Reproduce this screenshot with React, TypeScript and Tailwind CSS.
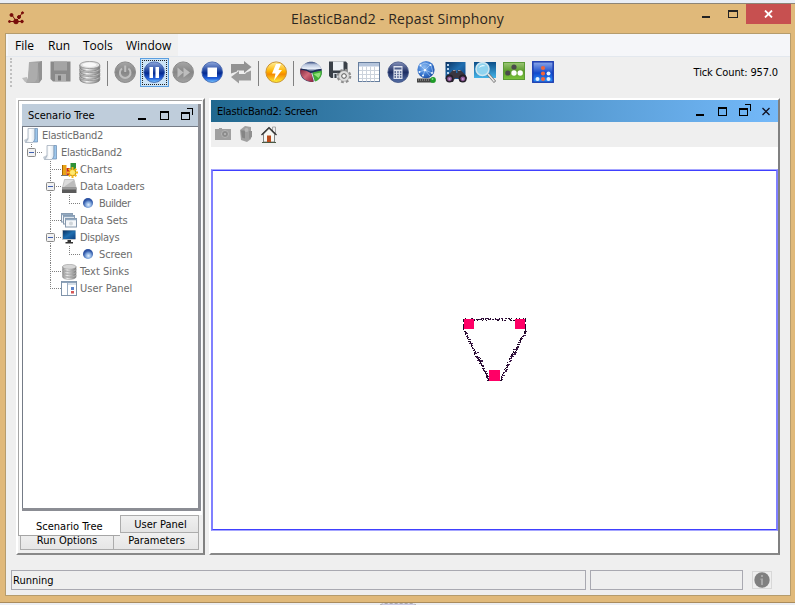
import React from "react";

const BOX = "block h-[23px] w-[23px] shrink-0";

function Svg({ children }: { children: React.ReactNode }) {
  return (
    <svg viewBox="0 0 23 23" className={BOX}>
      {children}
    </svg>
  );
}

function Defs() {
  return (
    <svg className="absolute h-0 w-0" aria-hidden="true">
      <defs>
        <linearGradient id="grayBall" x1="0" y1="0" x2="0" y2="1">
          <stop offset="0" stopColor="#a6a6a6" />
          <stop offset=".5" stopColor="#868686" />
          <stop offset="1" stopColor="#a2a2a2" />
        </linearGradient>
        <linearGradient id="blueBall" x1="0" y1="0" x2="0" y2="1">
          <stop offset="0" stopColor="#8fa8dc" />
          <stop offset=".45" stopColor="#1a409e" />
          <stop offset=".55" stopColor="#052a90" />
          <stop offset=".8" stopColor="#2360dc" />
          <stop offset="1" stopColor="#7fd0ff" />
        </linearGradient>
        <linearGradient id="navyBall" x1="0" y1="0" x2="0" y2="1">
          <stop offset="0" stopColor="#8592bb" />
          <stop offset=".5" stopColor="#1d2d62" />
          <stop offset="1" stopColor="#5570a8" />
        </linearGradient>
        <linearGradient id="yellowBall" x1="0" y1="0" x2="0" y2="1">
          <stop offset="0" stopColor="#fff0a0" />
          <stop offset=".45" stopColor="#ffb400" />
          <stop offset=".6" stopColor="#f58a00" />
          <stop offset="1" stopColor="#fff43a" />
        </linearGradient>
        <linearGradient id="disk" x1="0" y1="0" x2="1" y2="0">
          <stop offset="0" stopColor="#8a8a8a" />
          <stop offset=".35" stopColor="#f4f4f4" />
          <stop offset="1" stopColor="#777" />
        </linearGradient>
        <linearGradient id="screen" x1="0" y1="0" x2="1" y2="1">
          <stop offset="0" stopColor="#0b315f" />
          <stop offset=".5" stopColor="#1f6eb0" />
          <stop offset="1" stopColor="#0d3f80" />
        </linearGradient>
        <linearGradient id="sky" x1="0" y1="0" x2="0" y2="1">
          <stop offset="0" stopColor="#0b4d88" />
          <stop offset="1" stopColor="#46b4e8" />
        </linearGradient>
        <linearGradient id="green" x1="0" y1="0" x2="0" y2="1">
          <stop offset="0" stopColor="#9cc676" />
          <stop offset=".5" stopColor="#5c9c2c" />
          <stop offset="1" stopColor="#7cc53c" />
        </linearGradient>
        <linearGradient id="bluePanel" x1="0" y1="0" x2="0" y2="1">
          <stop offset="0" stopColor="#8fa9ea" />
          <stop offset=".45" stopColor="#2a5bd0" />
          <stop offset=".55" stopColor="#0f48cc" />
          <stop offset="1" stopColor="#2c98ff" />
        </linearGradient>
        <linearGradient id="pieTop" x1="0" y1="0" x2="0" y2="1">
          <stop offset="0" stopColor="#34497c" />
          <stop offset=".3" stopColor="#b9c6de" />
          <stop offset=".7" stopColor="#e8eef8" />
          <stop offset="1" stopColor="#1d3262" />
        </linearGradient>
        <linearGradient id="pieRed" x1="0" y1="0" x2="1" y2="1">
          <stop offset="0" stopColor="#7a1f38" />
          <stop offset=".5" stopColor="#cf6878" />
          <stop offset="1" stopColor="#8c1d3a" />
        </linearGradient>
        <linearGradient id="page" x1="0" y1="0" x2="1" y2="0">
          <stop offset="0" stopColor="#d4dce5" />
          <stop offset=".5" stopColor="#ffffff" />
          <stop offset="1" stopColor="#dbe6f0" />
        </linearGradient>
        <radialGradient id="globe" cx=".4" cy=".35" r=".7">
          <stop offset="0" stopColor="#8dbcf2" />
          <stop offset=".6" stopColor="#3a78d0" />
          <stop offset="1" stopColor="#1c4ba0" />
        </radialGradient>
        <radialGradient id="bead" cx=".55" cy=".68" r=".62">
          <stop offset="0" stopColor="#e4f1ff" />
          <stop offset=".45" stopColor="#7fa6dc" />
          <stop offset=".8" stopColor="#3158a8" />
          <stop offset="1" stopColor="#2a50a0" />
        </radialGradient>
      </defs>
    </svg>
  );
}

const OpenIcon = () => (
  <Svg>
    <path d="M1 17l5-1v3l2 3-4-1z" fill="#bdbdbd" />
    <path d="M9 1l12-1v18l-3 4H6l1-5z" fill="#a2a2a2" />
    <path d="M8 1l9 1-1 16-2 3-9 1 2-6z" fill="#acacac" />
    <path d="M17 2l4-2v18l-3 4z" fill="#929292" />
  </Svg>
);
const SaveIcon = () => (
  <Svg>
    <path d="M.5 .5h20v20H3L.500 18z" fill="#8a8a8a" />
    <path d="M4 .5h13v9H4z" fill="#a4a4a4" />
    <path d="M5 13h11v7H5z" fill="#adadad" />
    <path d="M8 14.500h3v5H8z" fill="#777" />
  </Svg>
);
const DbIcon = () => (
  <Svg>
    {[13.5, 9.5, 5.5, 1.5].map((y) => (
      <g key={y}>
        <path d={`M.8 ${y + 2.5}v2.500c0 5 20 5 20 0v-2.500z`} fill="url(#disk)" stroke="#7c7c7c" strokeWidth=".7" />
        <ellipse cx="10.800" cy={y + 2.5} rx="10" ry="3.600" fill="#e0e0e0" stroke="#888" strokeWidth=".7" />
      </g>
    ))}
    <ellipse cx="10.500" cy="3.700" rx="7" ry="2.200" fill="#f8f8f8" />
  </Svg>
);
const PowerIcon = () => (
  <Svg>
    <circle cx="11.200" cy="11.200" r="10.300" fill="url(#grayBall)" stroke="#8b8b8b" />
    <path d="M8 7.500a5.300 5.300 0 1 0 6.400 0" fill="none" stroke="#bfbfbf" strokeWidth="2" />
    <path d="M11.200 4.500v6.500" stroke="#bfbfbf" strokeWidth="2" />
  </Svg>
);
const PauseIcon = () => (
  <Svg>
    <circle cx="11.200" cy="11.200" r="10.300" fill="url(#blueBall)" stroke="#375ba8" strokeWidth=".8" />
    <path d="M6.500 6h3.500v11H6.500zM12.500 6H16v11h-3.500z" fill="#fff" />
  </Svg>
);
const ForwardIcon = () => (
  <Svg>
    <circle cx="11.200" cy="11.200" r="10.300" fill="url(#grayBall)" stroke="#8b8b8b" />
    <path d="M5.500 6.500l6 5-6 5zM11.500 6.500l6.500 5-6.500 5z" fill="#bdbdbd" />
  </Svg>
);
const StopIcon = () => (
  <Svg>
    <circle cx="11.200" cy="11.200" r="10.300" fill="url(#blueBall)" stroke="#375ba8" strokeWidth=".8" />
    <path d="M6.500 6.500h9.500v9.500H6.500z" fill="#fff" />
  </Svg>
);
const LoopIcon = () => (
  <Svg>
    <path d="M1 12.500V3h13V0l7.500 6L14 12V9.500H7v1z" fill="#929292" />
    <path d="M21 9.500V19.500H9v3L1 16l8-6v3h6.500v-1z" fill="#9c9c9c" />
  </Svg>
);
const FlashIcon = () => (
  <Svg>
    <circle cx="11.200" cy="11.200" r="10.300" fill="url(#yellowBall)" stroke="#ca9434" />
    <path d="M11 3h5l-2.500 6H17L9 19.500l1.500-7H7z" fill="#fff" />
  </Svg>
);
const PieIcon = () => (
  <Svg>
    <ellipse cx="11" cy="11" rx="10.800" ry="10" fill="#31436b" />
    <path d="M11 10.500L.8 7.500C3 3 7 .8 11 .8s8.500 2.200 10.300 7.200z" fill="url(#pieTop)" />
    <path d="M11 11L.5 7.500C-1 14 4 21 13.500 21z" fill="url(#pieRed)" />
    <path d="M12 11.500l9.700-2C22.500 15 19 19.500 15 20.500z" fill="#3fae35" />
    <path d="M13.500 13l7-1.500c0 2-.5 3.500-2 5.500z" fill="#93e07c" />
    <path d="M11.500 11l3 10" stroke="#f1f4f8" strokeWidth=".9" />
    <path d="M.7 8.500Q6 8 11 11.500q5-2.500 10.500-3" stroke="#1b2b55" strokeWidth="1.300" fill="none" />
  </Svg>
);
const SaveGearIcon = () => (
  <Svg>
    <path d="M0 .5h17l1.500 2V17H2l-2-2z" fill="#394048" />
    <path d="M4 .5h10.500v9H4z" fill="#edf1f5" />
    <path d="M4 12h9v5H4z" fill="#cfd5dc" />
    <path d="M5.500 13h2v4h-2z" fill="#394048" />
    <g transform="translate(15 15)">
      <circle r="5.500" fill="none" stroke="#8d8d8d" strokeWidth="3.600" strokeDasharray="2.400 1.920" />
      <circle r="5.300" fill="#dedede" stroke="#9a9a9a" strokeWidth=".6" />
      <circle r="2.300" fill="#fafafa" stroke="#555" />
    </g>
  </Svg>
);
const TableIcon = () => (
  <Svg>
    <rect x=".5" y="1.500" width="21" height="19" fill="#fff" stroke="#667e9e" />
    <path d="M1 2h20v3.500H1z" fill="#b5c5dc" />
    <path d="M1 9.500h20M1 13.500h20M1 17.500h20M4.500 5.500v15M8.500 5.500v15M12.500 5.500v15M16.500 5.500v15" stroke="#ccd3dc" />
  </Svg>
);
const CalcIcon = () => (
  <Svg>
    <circle cx="11.200" cy="11.200" r="10.300" fill="url(#navyBall)" stroke="#3c4f80" strokeWidth=".8" />
    <rect x="6.500" y="5" width="9" height="13" fill="#dfe4f0" />
    <path d="M7.500 6.500h7v2h-7z" fill="#4c5f8c" />
    <path d="M7.500 11h7M7.500 13.500h7M7.500 16h7" stroke="#3c4f80" strokeWidth="1.500" strokeDasharray="1.500 1.200" />
  </Svg>
);
const GlobeIcon = () => (
  <Svg>
    <circle cx="10" cy="8.700" r="8.600" fill="url(#globe)" />
    <path d="M4 4l5 5 6-6M3 11l6-2 7 3M9 9l-2 6M9 9l5 6M4 4l5-2 6 2 2 8" stroke="#b6d5fa" strokeWidth=".6" fill="none" />
    <g fill="#eef7ff">
      <circle cx="4.500" cy="4.500" r="1" /><circle cx="9" cy="9" r="1.300" /><circle cx="14.500" cy="4" r="1" />
      <circle cx="16" cy="12" r="1" /><circle cx="7" cy="14.500" r="1" /><circle cx="3.500" cy="11" r="1" />
    </g>
    <path d="M1 17.500h15v4H1z" fill="#444" />
    <path d="M2 19h11" stroke="#aaa" strokeDasharray="1 1" />
    <circle cx="17" cy="19" r="2.900" fill="#1d9b28" />
    <circle cx="16.500" cy="18" r="1" fill="#7be07f" />
  </Svg>
);
const BinocularsIcon = () => (
  <Svg>
    <path d="M.5 1h20v17H.500z" fill="url(#screen)" />
    <path d="M2 3h2v2H2zM2 7h2v2H2zM2 11h2v2H2z" fill="#bcd6ee" />
    <path d="M4 13l4-4h3v3h1.500V9h3l4 4 2.500 4-3 4h-4l-2-4h-3l-2 4H4l-3-4z" fill="#3a3640" />
    <path d="M8 9.500h2.500M13 9.500h2.500" stroke="#9a96a0" />
    <circle cx="4.500" cy="17.500" r="3.900" fill="#241f2a" /><circle cx="17.800" cy="17.500" r="3.900" fill="#241f2a" />
    <circle cx="4.500" cy="17.800" r="2.400" fill="#8f5a98" /><circle cx="17.800" cy="17.800" r="2.400" fill="#8f5a98" />
    <circle cx="4.500" cy="18" r="1" fill="#c79ccb" /><circle cx="17.800" cy="18" r="1" fill="#c79ccb" />
  </Svg>
);
const MagnifierIcon = () => (
  <Svg>
    <path d="M0 1h22v16H0z" fill="url(#sky)" />
    <path d="M14 13l7 8" stroke="#6f6f6f" strokeWidth="2.800" />
    <path d="M14 13l6.500 7.500" stroke="#ececec" strokeWidth="1.600" />
    <circle cx="8.500" cy="8" r="6.500" fill="#8fd3ef" stroke="#cfe6f0" strokeWidth="1.500" />
    <path d="M4.500 7q3-5 7-2-4 0-7 2z" fill="#e8fbff" />
  </Svg>
);
const GreenPanelIcon = () => (
  <Svg>
    <rect x=".5" y="1.500" width="21" height="17" fill="url(#green)" stroke="#5a9a35" />
    <circle cx="11" cy="6" r="2.600" fill="#4b4b4b" /><circle cx="4.800" cy="12" r="2.600" fill="#4b4b4b" />
    <circle cx="11" cy="12" r="2.700" fill="#fff" /><circle cx="17.200" cy="12" r="2.700" fill="#fff" />
  </Svg>
);
const BluePanelIcon = () => (
  <Svg>
    <rect x=".8" y=".8" width="20.400" height="20.400" fill="url(#bluePanel)" stroke="#1c3db0" strokeWidth="1.500" />
    <g fill="#f0653c"><circle cx="11" cy="7" r="2.100" /><circle cx="11" cy="12.500" r="2.100" /><circle cx="11" cy="18" r="2.100" /></g>
    <g fill="#e4f1ff"><circle cx="16.500" cy="12.500" r="2" /><circle cx="16.500" cy="18" r="2" /><circle cx="5.500" cy="18" r="2" /></g>
  </Svg>
);

function Tool({ children, active = false }: { children: React.ReactNode; active?: boolean }) {
  return (
    <button
      className={
        active
          ? "flex h-[29px] w-[29px] items-center justify-center border border-[#5b9fe0] bg-[#cce4f7] outline-1 -outline-offset-3 outline-dotted outline-[#222]"
          : "flex h-[29px] w-[29px] items-center justify-center"
      }
    >
      {children}
    </button>
  );
}
const Separator = () => (
  <div className="flex h-[29px] w-1.5 items-center justify-start pt-px pl-0.5">
    <div className="h-[25px] w-px bg-[#808080]" />
  </div>
);

const MinGlyph = () => (
  <svg viewBox="0 0 14 14" className="h-3.5 w-3.5"><path d="M3 10h8v2H3z" fill="#000" /></svg>
);
const MaxGlyph = () => (
  <svg viewBox="0 0 14 14" className="h-3.5 w-3.5"><path d="M3 3h9v9H3zM4 5v6h7V5z" fillRule="evenodd" /></svg>
);
const DetachGlyph = () => (
  <svg viewBox="0 0 14 14" className="h-3.5 w-3.5"><path d="M2 4h9v8H2zM3 6v5h7V6zM8 0h6v7h-1V1H8z" fillRule="evenodd" /></svg>
);
const CloseGlyph = () => (
  <svg viewBox="0 0 14 14" className="h-3.5 w-3.5"><path d="M3.500 4l7 7M10.500 4l-7 7" stroke="#112" strokeWidth="1.300" /></svg>
);

const FolderGlyph = () => (
  <svg viewBox="0 0 17 17" className="h-[17px] w-[17px]">
    <path d="M1 13l4-2v4l-3 .500z" fill="#c3ccd6" />
    <path d="M5 1.500h7v12L10 15.500H2.500L5 12z" fill="url(#page)" stroke="#a3afbd" strokeWidth=".8" />
    <path d="M12 1.500h2.500V15h-4L12 12z" fill="#9cc6ec" stroke="#7494b8" strokeWidth=".8" />
  </svg>
);
const ChartGlyph = () => (
  <svg viewBox="0 0 17 17" className="h-[17px] w-[17px]">
    <path d="M0 14h15v1H0z" fill="#777" />
    <path d="M1 4h4.500v10H1z" fill="#e8a317" /><path d="M1 4h1v10H1z" fill="#a86500" />
    <path d="M5.500 7h4v7h-4z" fill="#c92b1c" />
    <path d="M9.500 2H15v12H9.500z" fill="#2e9138" />
    <path d="M11.500 6v11M6 11.500h11M7.700 7.700l7.600 7.600M15.300 7.700l-7.600 7.600" stroke="#f8b616" strokeWidth="2" />
    <circle cx="11.500" cy="11.500" r="2.500" fill="#ffe870" />
  </svg>
);
const LoaderGlyph = () => (
  <svg viewBox="0 0 17 17" className="h-[17px] w-[17px]">
    <path d="M3.500 1.500h9.500l2 8H1.500z" fill="#dcdcdc" stroke="#aaa" strokeWidth=".6" />
    <path d="M4 8l9-6 1.500 7H3z" fill="#bcbcbc" />
    <path d="M1 9.500h14.500V15H1z" fill="#5a5a5a" /><path d="M1 9.500h14.500v2H1z" fill="#9a9a9a" />
  </svg>
);
const BeadGlyph = () => (
  <svg viewBox="0 0 17 17" className="h-[17px] w-[17px]"><circle cx="8" cy="8" r="5" fill="url(#bead)" /></svg>
);
const SetsGlyph = () => (
  <svg viewBox="0 0 17 17" className="h-[17px] w-[17px]">
    {[[0.5, 1.5], [2.5, 3.5], [4.5, 6.5]].map(([x, y]) => (
      <g key={x}>
        <rect x={x} y={y} width="11" height="8.500" fill="#f5f7fa" stroke="#8598ad" />
        <path d={`M${x} ${y + 1}h11`} stroke="#91a9c1" strokeWidth="1.500" />
      </g>
    ))}
    <circle cx="10" cy="11.500" r="2" fill="#cfd5da" />
  </svg>
);
const DisplayGlyph = () => (
  <svg viewBox="0 0 17 17" className="h-[17px] w-[17px]">
    <rect x="1" y="1" width="13.500" height="10" fill="#c4c8cc" />
    <rect x="2" y="1.500" width="12.500" height="8.500" fill="url(#screen)" />
    <path d="M6.500 11h3.500v2H6.500zM4.500 13h7.500v1.500H4.500z" fill="#333" />
  </svg>
);
const SinkGlyph = () => (
  <svg viewBox="0 0 23 23" className="h-4 w-[17px]">
    {[14, 10, 6, 2].map((y) => (
      <g key={y}>
        <path d={`M1.500 ${y + 2}v2.500c0 5 19.500 5 19.500 0v-2.500z`} fill="url(#disk)" stroke="#888" strokeWidth=".7" />
        <ellipse cx="11.250" cy={y + 2} rx="9.750" ry="3.500" fill="#d6d6d6" stroke="#8a8a8a" strokeWidth=".7" />
      </g>
    ))}
  </svg>
);
const PanelGlyph = () => (
  <svg viewBox="0 0 17 17" className="h-[17px] w-[17px]">
    <rect x=".5" y="1.500" width="15" height="14" fill="#fff" stroke="#7f93aa" />
    <path d="M1 1.500h14v1.500H1z" fill="#8ea3ba" /><path d="M6.500 3v12" stroke="#9caec2" />
    <path d="M7 3h8v2H7z" fill="#d6dfe9" />
    <path d="M10 7h3v3h-3z" fill="#5c83c8" /><path d="M10 11h3v2.500h-3z" fill="#d45757" />
  </svg>
);

type Node = { text: string; depth: number; icon: () => React.JSX.Element; expander?: boolean; last?: boolean; fit?: string };
const nodes: Node[] = [
  { text: "ElasticBand2", depth: 0, icon: FolderGlyph, fit: "tracking-[-0.25px]" },
  { text: "ElasticBand2", depth: 1, icon: FolderGlyph, expander: true, fit: "tracking-[-0.25px]" },
  { text: "Charts", depth: 2, icon: ChartGlyph },
  { text: "Data Loaders", depth: 2, icon: LoaderGlyph, expander: true, fit: "tracking-[-0.1px]" },
  { text: "Builder", depth: 3, icon: BeadGlyph, fit: "tracking-[-0.5px]" },
  { text: "Data Sets", depth: 2, icon: SetsGlyph, fit: "tracking-[-0.05px]" },
  { text: "Displays", depth: 2, icon: DisplayGlyph, expander: true, fit: "tracking-[-0.3px]" },
  { text: "Screen", depth: 3, icon: BeadGlyph, fit: "tracking-[-0.1px]" },
  { text: "Text Sinks", depth: 2, icon: SinkGlyph },
  { text: "User Panel", depth: 2, icon: PanelGlyph, last: true },
];

function Branch({ node }: { node: Node }) {
  if (node.depth === 0) return null;
  const w = node.depth * 19;
  const x = w - 10.5;
  return (
    <svg width={w} height="17" viewBox={`0 0 ${w} 17`} className="block shrink-0">
      <g stroke="#808080" strokeDasharray="1 1">
        <path d={`M${x - 0.5} 8.500H${w}`} />
        {node.depth === 1 && <path d={`M${x} 0V8`} />}
        {node.depth === 2 && <path d={`M${x} 0V${node.last ? 9 : 17}`} />}
        {node.depth === 3 && <path d={`M27.500 0V17M${x} 0V9`} />}
      </g>
      {node.expander && (
        <g>
          <rect x={x - 4} y="4.500" width="8" height="8" rx="1" fill="#f1f1f1" stroke="#8a8a8a" />
          <path d={`M${x - 2.5} 8.500h5`} stroke="#3f5fb0" />
        </g>
      )}
    </svg>
  );
}

function Tree() {
  return (
    <div className="flex flex-col">
      {nodes.map((n, i) => (
        <div key={i} className="flex h-[17px] items-center">
          <Branch node={n} />
          <n.icon />
          <span className={"pl-0.5 text-[11px] leading-[17px] whitespace-pre text-[#6c6c6c] " + (n.fit ?? "")}>{n.text}</span>
        </div>
      ))}
    </div>
  );
}

/* Particles strung between the three anchors, scattered slightly around each edge. */
function bandPoints() {
  let seed = 7;
  const rnd = () => {
    seed = (seed * 16807) % 2147483647;
    return seed / 2147483647;
  };
  const edges = [
    [252, 147, 312, 147, 75, 1.2],
    [251, 159, 262, 181, 44, 0.8],
    [262, 181, 267, 190, 34, 2],
    [267, 190, 275, 208, 38, 0.8],
    [312, 159, 302, 177, 38, 0.9],
    [302, 177, 296, 188, 34, 1.4],
    [296, 188, 287, 208, 40, 0.9],
  ];
  const pts: [number, number][] = [];
  edges.forEach(([x1, y1, x2, y2, n, a]) => {
    for (let i = 0; i <= n; i++) {
      const t = i / n;
      pts.push([
        Math.round(x1 + (x2 - x1) * t + (rnd() - 0.5) * 2 * a),
        Math.round(y1 + (y2 - y1) * t + (rnd() - 0.5) * 2 * a),
      ]);
    }
  });
  return pts;
}

function Band() {
  return (
    <svg viewBox="0 -1 563 358" className="block h-[358px] w-[563px]" shapeRendering="crispEdges">
      {bandPoints().map(([x, y], i) => (
        <rect key={i} x={x} y={y} width={i % 3 ? 1 : 2} height="1" fill={i % 3 ? "#1c0524" : "#3c1848"} />
      ))}
      <path d="M250 147h1v3h-1zM250 152h1v6h-1zM312 146h1v4h-1zM312 152h1v10h-1zM274 208h4v1h-4zM284 208h5v1h-5z" fill="#26072e" />
      <path d="M251 147h10v10h-10zM302 147h10v10h-10zM276 198h11v11h-11z" fill="#ff0066" />
    </svg>
  );
}

export default function App() {
  return (
    <div className="flex h-[605px] w-[795px] flex-col overflow-hidden bg-[#eceef2] font-['DejaVu_Sans_Condensed','DejaVu_Sans',sans-serif] text-[11px] text-black [font-stretch:condensed]">
      <Defs />
      <div className="h-[3px] shrink-0 bg-[#e9eef6]" />
      <div className="flex h-[600px] shrink-0 flex-col border-t border-b border-t-[#8d8577] border-b-[#a98b5c] bg-[#e0b97a]">
        <header className="flex h-[29px] shrink-0 pl-2">
          <svg viewBox="0 0 17 14" className="mt-[7px] h-3.5 w-[17px] shrink-0">
            <g fill="#780c0a" stroke="#780c0a">
              <path d="M4 4l4 6 3-3 3-5M2 10.500h13" fill="none" strokeWidth="1" />
              <circle cx="3.500" cy="4" r="1.500" /><circle cx="14.500" cy="1.800" r="1" /><circle cx="11" cy="6" r="1.500" />
              <circle cx="1.500" cy="10.500" r="1" /><circle cx="8" cy="10.500" r="2.300" /><circle cx="14" cy="10.500" r="1.300" />
            </g>
          </svg>
          <h1 className="mt-[3px] ml-[266px] w-[400px] font-['Open_Sans',sans-serif] text-[14px] leading-6 tracking-[0.16px] whitespace-pre text-[#2c2620] [font-stretch:normal]">
            ElasticBand2 - Repast Simphony
          </h1>
          <svg viewBox="0 0 55 29" className="h-[29px] w-[55px] shrink-0">
            <path d="M11 12h8v2h-8zM37 6h10v8H37zM38 8v5h8V8z" fillRule="evenodd" fill="#222" />
          </svg>
          <button className="flex h-5 w-[45px] items-center justify-center bg-[#c75050]">
            <svg viewBox="0 0 9 8" className="h-2 w-[9px]"><path d="M1 .5l7 7M8 .5l-7 7" stroke="#fff" strokeWidth="1.800" /></svg>
          </button>
        </header>

        <div className="ml-[5px] flex h-[563px] w-[786px] shrink-0 flex-col border border-[#b59c6d] bg-[#efefef]">
          <nav className="flex h-[23px] shrink-0 border-b border-[#e3e8ee] bg-[#f5f6f9] pl-0.5">
            <div className="flex w-[170px] bg-[#f0f0f0] pl-[7px] font-['Open_Sans',sans-serif] text-[12px] leading-[23px] [font-stretch:normal]">
              <span className="w-[33px]">File</span>
              <span className="w-[35px]">Run</span>
              <span className="w-[43px]">Tools</span>
              <span>Window</span>
            </div>
          </nav>

          <div className="flex h-[41px] shrink-0 items-start pt-px">
            <div className="mt-0 ml-1 h-[29px] w-2 border-l-2 border-dotted border-[#c0c0c0]" />
            <Tool><OpenIcon /></Tool>
            <Tool><SaveIcon /></Tool>
            <Tool><DbIcon /></Tool>
            <Separator />
            <Tool><PowerIcon /></Tool>
            <Tool active><PauseIcon /></Tool>
            <Tool><ForwardIcon /></Tool>
            <Tool><StopIcon /></Tool>
            <Tool><LoopIcon /></Tool>
            <Separator />
            <Tool><FlashIcon /></Tool>
            <Separator />
            <Tool><PieIcon /></Tool>
            <Tool><SaveGearIcon /></Tool>
            <Tool><TableIcon /></Tool>
            <Tool><CalcIcon /></Tool>
            <Tool><GlobeIcon /></Tool>
            <Tool><BinocularsIcon /></Tool>
            <Tool><MagnifierIcon /></Tool>
            <Tool><GreenPanelIcon /></Tool>
            <Tool><BluePanelIcon /></Tool>
            <span className="mr-3 ml-auto leading-[29px] tracking-[-0.15px] whitespace-pre">Tick Count: 957.0</span>
          </div>

          <div className="flex h-[457px] shrink-0 pl-2.5">
            <aside className="flex h-[457px] w-[189px] shrink-0 flex-col border-t-2 border-r-2 border-b-2 border-l-2 border-t-white border-r-[#808080] border-b-[#888] border-l-white bg-[#efefef]">
              <div className="flex h-[415px] w-[184px] flex-col border-t border-l border-t-[#a5a5a5] border-l-[#a5a5a5] bg-white pt-[3px] pl-[3px]">
                <div className="flex h-[407px] w-[179px] flex-col border-r-[3px] border-b-[3px] border-[#8b8d94]">
                  <div className="flex h-[22px] shrink-0 items-center bg-[#bfcddb] pl-1.5">
                    <span className="w-[106px] pt-0.5 whitespace-pre">Scenario Tree</span>
                    <div className="flex gap-2 pl-px"><MinGlyph /><MaxGlyph /><DetachGlyph /></div>
                  </div>
                  <div className="flex-1 border-t border-l border-[#747b86] bg-white"><Tree /></div>
                </div>
              </div>
              <div className="flex h-[18px] shrink-0">
                <div className="relative z-10 h-[21px] w-[102px] shrink-0 border-b border-l border-[#a5a5a5] bg-white pl-[17px] leading-[23px] whitespace-pre">Scenario Tree</div>
                <div className="h-[18px] w-[79px] border border-[#acacac] bg-gradient-to-b from-[#f0f0f0] to-[#e4e4e4] pl-0.5 text-center leading-[17px]">User Panel</div>
              </div>
              <div className="ml-0.5 flex h-[17px] shrink-0">
                <div className="h-[17px] w-[94px] border border-t-0 border-[#acacac] bg-gradient-to-b from-[#f0f0f0] to-[#e6e6e6] text-center leading-[15px]">Run Options</div>
                <div className="h-[17px] w-[85px] border border-t-0 border-l-0 border-[#acacac] bg-gradient-to-b from-[#f0f0f0] to-[#e6e6e6] pl-px text-center leading-[15px]">Parameters</div>
              </div>
            </aside>

            <main className="ml-1 flex h-[457px] w-[571px] shrink-0 flex-col border-t-2 border-r-2 border-b-2 border-l-2 border-t-white border-r-[#808080] border-b-[#888] border-l-white bg-white">
              <div className="flex h-[22px] shrink-0 items-center bg-gradient-to-r from-[#20688f] to-[#74b9fa] pl-1.5">
                <span className="pt-0.5 tracking-[-0.2px] whitespace-pre">ElasticBand2: Screen</span>
                <div className="mr-[5px] ml-auto flex gap-2"><MinGlyph /><MaxGlyph /><DetachGlyph /><CloseGlyph /></div>
              </div>
              <div className="flex h-[25px] shrink-0 items-start bg-[#efefef] pt-1 pl-[3px]">
                <svg viewBox="0 0 18 16" className="h-4 w-[18px]">
                  <path d="M1 3h4V2h3v1h9v11H1z" fill="#a0a0a0" /><circle cx="11" cy="8" r="3.500" fill="#8c8c8c" stroke="#b5b5b5" /><circle cx="11" cy="8" r="1" fill="#bbb" />
                </svg>
                <svg viewBox="0 0 18 16" className="ml-1.5 h-4 w-[18px]">
                  <path d="M2 4l5-4 6 1v12l-4 3-6-2z" fill="#a0a0a0" /><path d="M3 4.500h4v8l-3-1z" fill="#858585" /><path d="M11 5h3v6l-3 2z" fill="#8f8f8f" /><circle cx="8.500" cy="4" r="2" fill="#b8b8b8" />
                </svg>
                <svg viewBox="0 0 18 18" className="ml-1 h-[18px] w-[18px]">
                  <path d="M12.500 1h3v6h-3z" fill="#eee" stroke="#888" strokeWidth=".7" />
                  <path d="M3.500 8L9 2.500 14.500 8v8h-11z" fill="#f7f8f4" stroke="#666" strokeWidth=".8" />
                  <path d="M1.500 9L9 1.500 16.500 9" fill="none" stroke="#2a2a2a" strokeWidth="1.200" />
                  <path d="M7 9.500h4V16H7z" fill="#ba4c1c" /><path d="M2 16.500h14" stroke="#4c5a44" />
                </svg>
              </div>
              <div className="mt-[22px] h-[362px] border border-x-[#8080ff] border-t-[#a6a6ff] border-b-[#a6a6ff]">
                <div className="h-[360px] border border-x-[#8080ff] border-t-[#4040ff] border-b-[#4040ff]"><Band /></div>
              </div>
            </main>
          </div>

          <footer className="flex h-10 shrink-0 items-start pt-[15px] pl-[5px]">
            <div className="h-5 w-[575px] border border-[#a9a9b1] pl-px leading-[19px]">Running</div>
            <div className="ml-1 h-5 w-[153px] border border-[#a9a9b1]" />
            <div className="mt-px ml-[9px] flex h-[18px] w-5 items-center justify-center border border-[#d8d8d8]">
              <svg viewBox="0 0 16 16" className="h-4 w-4 shrink-0"><circle cx="8" cy="8" r="7.700" fill="#808080" /><path d="M7 3h2v2H7zM6.500 6.500H9V13H7V8h-.500z" fill="#a8a8a8" /></svg>
            </div>
          </footer>
        </div>
      </div>
      <div className="flex justify-center">
        <svg viewBox="0 0 40 2" className="h-0.5 w-10"><path d="M2 2l3-1.500h30l3 1.500" fill="#c9c9e4" stroke="#aaa" strokeDasharray="3 2" /></svg>
      </div>
    </div>
  );
}
